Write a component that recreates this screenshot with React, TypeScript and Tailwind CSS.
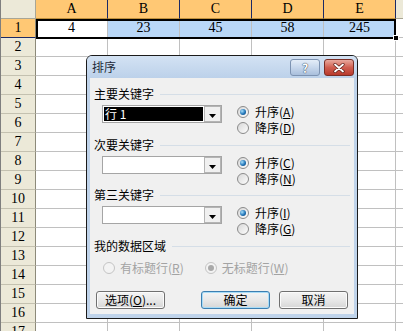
import React from "react";

const cols = ["A", "B", "C", "D", "E"];
const values = ["4", "23", "45", "58", "245"];
const rowNums = Array.from({ length: 17 }, (_, i) => i + 1);

const ui = { fontFamily: '"Noto Sans CJK SC", "Noto Sans", sans-serif' };
const cell = { fontFamily: '"Liberation Serif", "DejaVu Serif", serif' };

function Radio({ checked, disabled }: { checked?: boolean; disabled?: boolean }) {
  return (
    <span
      className={`flex h-[12px] w-[12px] shrink-0 items-center justify-center rounded-full border ${
        disabled
          ? "border-[#c4c4c4] bg-[#f3f3f3]"
          : "border-[#8a8a8a] bg-gradient-to-br from-[#d8d8d8] to-[#fdfdfd]"
      }`}
    >
      {checked && (
        <span
          className={`h-[6px] w-[6px] rounded-full ${
            disabled
              ? "bg-[#a9a9a9]"
              : "bg-[radial-gradient(circle_at_35%_35%,#a9e0fb,#1f74b8_55%,#0d3b6b)]"
          }`}
        />
      )}
    </span>
  );
}

function Option({
  text,
  hotkey,
  checked,
  disabled,
}: {
  text: string;
  hotkey: string;
  checked?: boolean;
  disabled?: boolean;
}) {
  return (
    <div className="flex h-[16px] items-center">
      <Radio checked={checked} disabled={disabled} />
      <span className={`${disabled ? "ml-[5px] text-[#a3a3a3]" : "ml-[6px] text-black"}`}>
        {text}(<u>{hotkey}</u>)
      </span>
    </div>
  );
}

function Combo({ value }: { value?: string }) {
  return (
    <div className="mt-[3px] ml-[8px] flex h-[18px] w-[120px] shrink-0 border border-[#a5a5a5] bg-white">
      <div className="m-px flex flex-1 items-center">
        {value && (
          <div className="flex h-full w-full items-center bg-black pl-[1px] text-white">{value}</div>
        )}
      </div>
      <div className="flex w-[17px] items-center justify-center border border-[#b4b4b4] bg-[#f0f0f0] pt-[3px]">
        <svg width="7" height="4" viewBox="0 0 7 4">
          <polygon points="0,0 7,0 3.5,4" fill="#000" />
        </svg>
      </div>
    </div>
  );
}

function Section({
  title,
  value,
  keys,
  className,
}: {
  title: string;
  value?: string;
  keys: [string, string];
  className?: string;
}) {
  return (
    <div className={className}>
      <div className="flex h-[16px] items-center">
        <span>{title}</span>
        <div className="ml-[6px] h-px flex-1 bg-[#d5dee7]" />
      </div>
      <div className="flex">
        <Combo value={value} />
        <div className="ml-[15px] mt-[2px] flex flex-col">
          <Option text="升序" hotkey={keys[0]} checked />
          <Option text="降序" hotkey={keys[1]} />
        </div>
      </div>
    </div>
  );
}

function Button({ children, focused }: { children: React.ReactNode; focused?: boolean }) {
  return (
    <div
      className={`flex h-[18px] w-[69px] items-center justify-center rounded-[3px] border bg-gradient-to-b from-[#f4f4f4] via-[#e8e8e8] to-[#d6d6d6] ${
        focused
          ? "border-[#3c7fb1] shadow-[inset_0_0_0_1px_#a8dcf7]"
          : "border-[#707070] shadow-[inset_0_0_0_1px_#fbfbfb]"
      }`}
    >
      {children}
    </div>
  );
}

function SortDialog() {
  return (
    <div
      className="absolute left-[85px] top-[55px] flex h-[264px] w-[272px] flex-col rounded-t-[6px] border border-[#1b1b1b] bg-[#bfd3ea] text-[12px] leading-[16px] text-black"
      style={ui}
    >
      <div className="flex h-[22px] items-start rounded-t-[5px] bg-gradient-to-b from-[#d3e2f3] to-[#bcd1ea] pl-[5px] pr-[3px]">
        <span className="mt-[4px] flex-1 leading-[14px] text-[#1e2a3a]">排序</span>
        <div className="mt-[3px] flex h-[17px] w-[30px] items-center justify-center rounded-[3px] border border-[#7d93b2] bg-gradient-to-b from-[#e4edf8] via-[#c7d7ec] to-[#a9bfdc] text-[12px] font-bold text-white [text-shadow:0_0_1px_#2c3d55,0_0_1px_#2c3d55]">
          ?
        </div>
        <div className="ml-[4px] mt-[3px] flex h-[17px] w-[30px] items-center justify-center rounded-[3px] border border-[#7a2e26] bg-gradient-to-b from-[#e8a99e] via-[#cf5e50] to-[#b8392c]">
          <svg width="12" height="10" viewBox="0 0 12 10">
            <path d="M2 1.5 L10 8.5 M10 1.5 L2 8.5" stroke="#5a1d16" strokeWidth="3.2" strokeLinecap="round" />
            <path d="M2 1.5 L10 8.5 M10 1.5 L2 8.5" stroke="#fff" strokeWidth="1.8" strokeLinecap="round" />
          </svg>
        </div>
      </div>
      <div className="mx-[3px] mb-[4px] flex flex-1 flex-col bg-[#f0f0f0] pl-[4px] pr-[4px] pt-[8px]">
        <Section title="主要关键字" value="行 1" keys={["A", "D"]} />
        <Section title="次要关键字" keys={["C", "N"]} className="mt-[1px]" />
        <Section title="第三关键字" keys={["I", "G"]} />
        <div className="mt-[1px] flex h-[16px] items-center">
          <span>我的数据区域</span>
          <div className="ml-[6px] h-px flex-1 bg-[#d5dee7]" />
        </div>
        <div className="ml-[9px] mt-[6px] flex">
          <Option text="有标题行" hotkey="R" disabled />
          <div className="ml-[21px]">
            <Option text="无标题行" hotkey="W" checked disabled />
          </div>
        </div>
        <div className="ml-[2px] mt-[15px] flex">
          <Button>
            <span>
              选项(<u>O</u>)...
            </span>
          </Button>
          <div className="ml-[36px]">
            <Button focused>确定</Button>
          </div>
          <div className="ml-[9px]">
            <Button>取消</Button>
          </div>
        </div>
      </div>
    </div>
  );
}

export default function App() {
  return (
    <div className="relative h-[331px] w-[403px] overflow-hidden border-l border-[#7f7f7f] bg-white text-[14px] text-black" style={cell}>
      <div className="flex h-[19px]">
        <div className="w-[35px] shrink-0 border-r border-b border-[#a9a695] bg-[#ece9d8]" />
        {cols.map((c) => (
          <div
            key={c}
            className="flex w-[72px] shrink-0 items-center justify-center border-r border-b border-r-[#1c2a66] border-b-[#c0913d] bg-[#ffc874] leading-none"
          >
            {c}
          </div>
        ))}
        <div className="flex-1 border-b border-[#a9a695] bg-[#ece9d8]" />
      </div>
      {rowNums.map((r) => (
        <div key={r} className="flex h-[19px]">
          <div
            className={`flex w-[35px] shrink-0 items-center justify-center border-r border-b leading-none ${
              r === 1
                ? "border-r-[#8d8a7a] border-b-[#1c2a66] bg-[#ffc874]"
                : "border-r-[#8d8a7a] border-b-[#c4c1b0] bg-[#ece9d8]"
            }`}
          >
            {r}
          </div>
          {cols.map((c, i) => (
            <div
              key={c}
              className={`flex w-[72px] shrink-0 items-center justify-center border-r border-b border-[#c0c0c0] leading-none ${
                r === 1 && i > 0 ? "bg-[#b9d7f7]" : "bg-white"
              }`}
            >
              {r === 1 ? values[i] : ""}
            </div>
          ))}
          <div className="flex-1 border-b border-[#c0c0c0]" />
        </div>
      ))}
      <div className="pointer-events-none absolute left-[35px] top-[19px] h-[20px] w-[360px] border-2 border-black" />
      <div className="absolute left-[392px] top-[35px] h-[6px] w-[6px] border border-white bg-black" />
      <SortDialog />
    </div>
  );
}
